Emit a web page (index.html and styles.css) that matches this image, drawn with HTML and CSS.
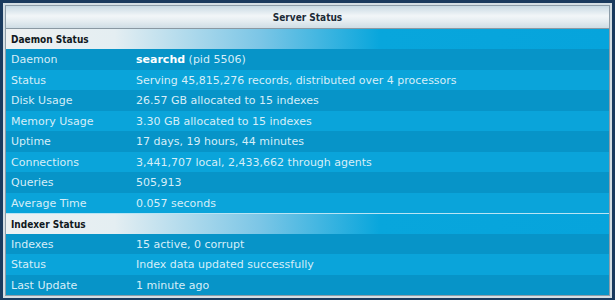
FILE: index.html
```html
<!DOCTYPE html>
<html>
<head>
<meta charset="utf-8">
<link rel="stylesheet" href="styles.css">
</head>
<body>
<div class="panel">
  <div class="title">Server Status</div>
  <div class="section">Daemon Status</div>
  <div class="row dark"><span class="label">Daemon</span><span class="value"><b>searchd</b> (pid 5506)</span></div>
  <div class="row light"><span class="label">Status</span><span class="value">Serving 45,815,276 records, distributed over 4 processors</span></div>
  <div class="row dark"><span class="label">Disk Usage</span><span class="value">26.57 GB allocated to 15 indexes</span></div>
  <div class="row light"><span class="label">Memory Usage</span><span class="value">3.30 GB allocated to 15 indexes</span></div>
  <div class="row dark"><span class="label">Uptime</span><span class="value">17 days, 19 hours, 44 minutes</span></div>
  <div class="row light"><span class="label">Connections</span><span class="value">3,441,707 local, 2,433,662 through agents</span></div>
  <div class="row dark"><span class="label">Queries</span><span class="value">505,913</span></div>
  <div class="row light"><span class="label">Average Time</span><span class="value">0.057 seconds</span></div>
  <div class="section top-line">Indexer Status</div>
  <div class="row dark"><span class="label">Indexes</span><span class="value">15 active, 0 corrupt</span></div>
  <div class="row light"><span class="label">Status</span><span class="value">Index data updated successfully</span></div>
  <div class="row dark"><span class="label">Last Update</span><span class="value">1 minute ago</span></div>
</div>
</body>
</html>
```
FILE: styles.css
```css
html, body {
  margin: 0;
  padding: 0;
  background: #1a3a5e;
  height: 300px;
  overflow: hidden;
}
body {
  padding: 3px 0 0 3px;
  font-family: "DejaVu Sans", Verdana, sans-serif;
  font-size: 11px;
}
.panel {
  width: 603px;
  border: 2px solid #d4dee4;
  box-shadow: inset 0 0 0 1px #8c9ca8;
  padding: 1px;
  background: #0896c8;
}
.title {
  height: 22px;
  line-height: 23px;
  text-align: center;
  font-family: "DejaVu Sans Condensed", "DejaVu Sans", sans-serif;
  font-weight: bold;
  font-size: 10px;
  color: #1c2a36;
  background: linear-gradient(#c9dae4 0%, #f2f6f8 45%, #e4ecf0 70%, #cfdde5 100%);
  border-bottom: 1px solid #8a98a2;
}
.section {
  height: 20px;
  line-height: 21px;
  padding-left: 5px;
  font-family: "DejaVu Sans Condensed", "DejaVu Sans", sans-serif;
  font-weight: bold;
  font-size: 10px;
  color: #101820;
  background: linear-gradient(to right, #eef1f2 0%, #e4eef2 18%, #7cc6e6 42%, #08a6dc 62%, #06a4dc 100%);
}
.section.top-line {
  height: 19.5px;
  border-top: 1px solid #b8e4f4;
}
.row {
  display: flex;
  height: 20.5px;
  line-height: 22px;
  color: #d6eef8;
  padding-left: 5px;
}
.row.dark { background: #0794c8; }
.row.light { background: #0aa4da; }
.label { width: 125px; flex: none; }
.value { flex: 1; }
.value b { color: #ffffff; }
```
